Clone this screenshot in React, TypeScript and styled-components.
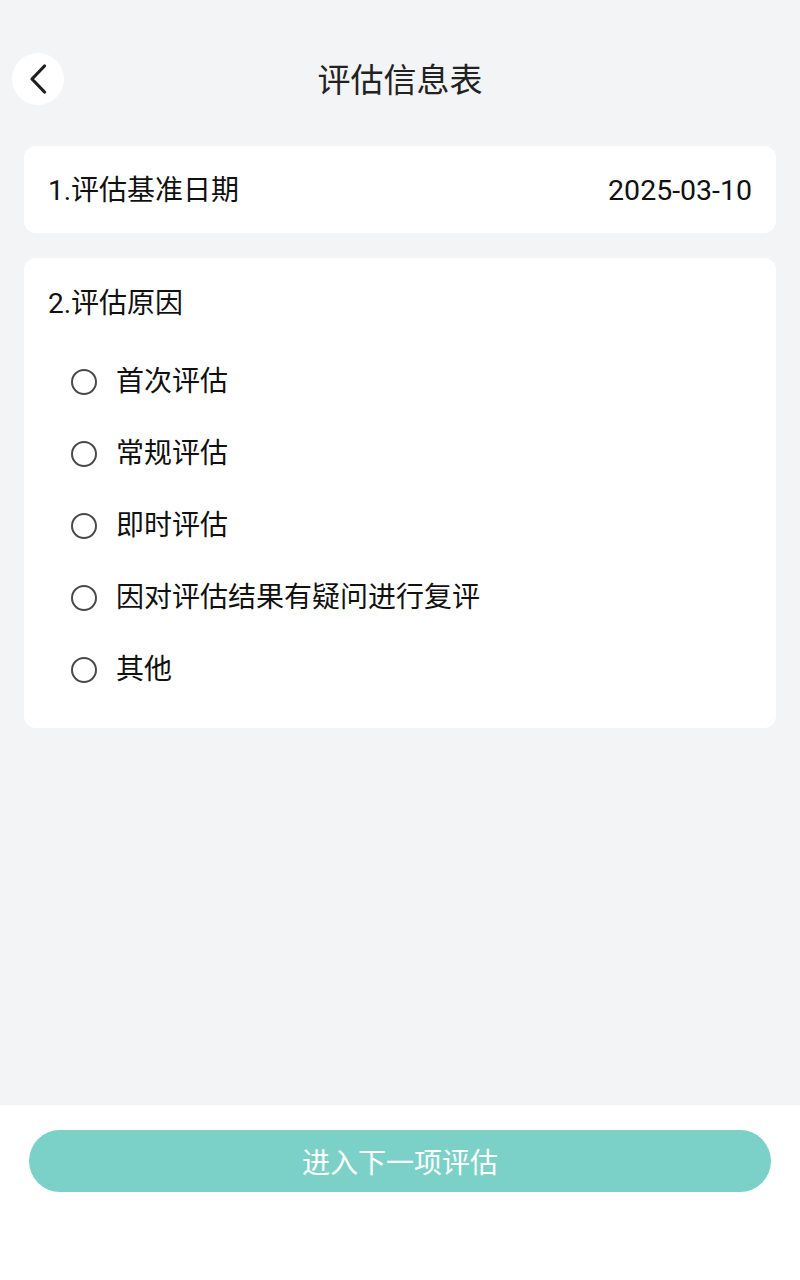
import React, { useState } from 'react'
import styled, { createGlobalStyle } from 'styled-components'

const GlobalStyle = createGlobalStyle`
  html, body {
    margin: 0;
    padding: 0;
    background: #f3f4f6;
  }
  * {
    box-sizing: border-box;
  }
`

const reasons = [
  '首次评估',
  '常规评估',
  '即时评估',
  '因对评估结果有疑问进行复评',
  '其他',
]

const App: React.FC = () => {
  const [selected, setSelected] = useState<number | null>(null)

  return (
    <>
      <GlobalStyle />
      <Page>
        <Content>
          <Header>
            <BackButton aria-label="返回">
              <svg width="20" height="32" viewBox="0 0 20 32" fill="none">
                <path
                  d="M16.5 3 L4 16 L16.5 29"
                  stroke="#1f1f1f"
                  strokeWidth="3.2"
                  strokeLinecap="round"
                  strokeLinejoin="round"
                />
              </svg>
            </BackButton>
            <Title>评估信息表</Title>
          </Header>

          <DateCard>
            <Label>1.评估基准日期</Label>
            <DateValue>2025-03-10</DateValue>
          </DateCard>

          <ReasonCard>
            <Label>2.评估原因</Label>
            <OptionList>
              {reasons.map((r, i) => (
                <Option key={r} onClick={() => setSelected(i)}>
                  <Radio checked={selected === i} />
                  <OptionText>{r}</OptionText>
                </Option>
              ))}
            </OptionList>
          </ReasonCard>
        </Content>

        <Footer>
          <NextButton>进入下一项评估</NextButton>
        </Footer>
      </Page>
    </>
  )
}

const Page = styled.div`
  display: flex;
  flex-direction: column;
  min-height: 100vh;
  font-family: Roboto, 'Noto Sans CJK SC', sans-serif;
  color: #1a1a1a;
`

const Content = styled.div`
  flex: 1;
  padding: 53px 24px 24px;
`

const Header = styled.div`
  position: relative;
  height: 52px;
  display: flex;
  align-items: center;
  justify-content: center;
  margin-bottom: 41px;
`

const BackButton = styled.button`
  position: absolute;
  left: -12px;
  top: 0;
  width: 52px;
  height: 52px;
  border-radius: 50%;
  border: none;
  background: #ffffff;
  display: flex;
  align-items: center;
  justify-content: center;
  padding: 0;
  cursor: pointer;
`

const Title = styled.div`
  font-size: 33px;
  line-height: 52px;
  padding-top: 3px;
  color: #222;
`

const Card = styled.div`
  background: #ffffff;
  border-radius: 12px;
`

const DateCard = styled(Card)`
  height: 87px;
  padding: 2px 24px 0;
  display: flex;
  align-items: center;
  justify-content: space-between;
  margin-bottom: 25px;
`

const Label = styled.div`
  font-size: 28px;
  line-height: 42px;
  color: #111;
`

const DateValue = styled.div`
  font-size: 28.5px;
  line-height: 42px;
  color: #111;
`

const ReasonCard = styled(Card)`
  padding: 25px 24px 22px;
`

const OptionList = styled.div`
  display: flex;
  flex-direction: column;
  margin-top: 21px;
  padding-left: 23px;
`

const Option = styled.div`
  height: 72px;
  display: flex;
  align-items: center;
  gap: 19px;
  cursor: pointer;
`

const Radio = styled.span<{ checked: boolean }>`
  width: 26px;
  height: 26px;
  border-radius: 50%;
  border: 2.8px solid ${(p) => (p.checked ? '#7bd1c7' : '#4a4a4a')};
  background: ${(p) =>
    p.checked ? 'radial-gradient(circle, #7bd1c7 45%, transparent 50%)' : 'transparent'};
  flex-shrink: 0;
`

const OptionText = styled.span`
  font-size: 28px;
  line-height: 42px;
  color: #111;
`

const Footer = styled.div`
  background: #ffffff;
  height: 175px;
  padding: 25px 29px 0;
`

const NextButton = styled.button`
  width: 100%;
  height: 62px;
  border: none;
  border-radius: 31px;
  background: #7bd1c7;
  color: #ffffff;
  font-family: Roboto, 'Noto Sans CJK SC', sans-serif;
  font-size: 28px;
  cursor: pointer;
`

export default App
